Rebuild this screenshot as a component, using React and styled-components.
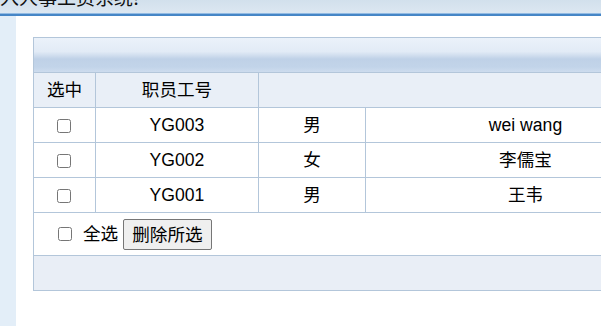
import React from "react";
import styled, { createGlobalStyle } from "styled-components";

const Global = createGlobalStyle`
  html, body { margin: 0; padding: 0; background: #fff; overflow: hidden; }
  body { font-family: "Liberation Sans", "Noto Sans CJK SC", sans-serif; color: #000; }
`;

const Page = styled.div`
  display: flex;
  flex-direction: column;
  width: 601px;
  height: 326px;
  overflow: hidden;
`;

const TopBar = styled.div`
  height: 14px;
  flex: none;
  overflow: hidden;
  background: linear-gradient(to bottom, #d2e0ec, #dde8f2);
  box-shadow: inset 0 -1px 0 #93bbe3;
  border-bottom: 2px solid #4686c6;
`;

const Welcome = styled.div`
  font-family: "Noto Sans CJK SC", sans-serif;
  font-size: 19px;
  line-height: 19px;
  white-space: nowrap;
  margin: -13px 0 0 -57px;
  color: #111;
`;

const Body = styled.div`
  display: flex;
  flex: 1;
  min-height: 0;
`;

const Sidebar = styled.div`
  width: 16px;
  flex: none;
  background: #e3eef8;
`;

const Main = styled.div`
  flex: 1;
  padding: 21px 0 0 17px;
  overflow: hidden;
`;

const Panel = styled.div`
  width: 760px;
  border: 1px solid #b3c6da;
`;

const TitleBar = styled.div`
  height: 34px;
  border-bottom: 1px solid #b3c6da;
  background: linear-gradient(
    to bottom,
    #ebf2fa 0%,
    #e2ebf6 40%,
    #bfd1e7 62%,
    #c2d4e9 85%,
    #cddcee 100%
  );
`;

const Table = styled.table`
  width: 100%;
  border-collapse: separate;
  border-spacing: 0;
  table-layout: fixed;
  font-size: 17.6px;
`;

const Cell = styled.td`
  box-sizing: border-box;
  height: ${(p) => p.$h || 35}px;
  padding: 0;
  font-weight: 400;
  text-align: ${(p) => p.$align || "center"};
  vertical-align: middle;
  border-bottom: 1px solid #b3c6da;
  border-right: ${(p) => (p.$last ? "none" : "1px solid #b3c6da")};
  background: ${(p) => (p.$head ? "#e9eff7" : "#fff")};
  line-height: 22px;
`;

const Check = styled.input.attrs({ type: "checkbox" })`
  width: 14px;
  height: 14px;
  margin: 3px 4px 3px 3px;
  vertical-align: middle;
`;

const FooterInner = styled.div`
  display: flex;
  align-items: center;
  padding-left: 21px;
`;

const Label = styled.span`
  margin-left: 7px;
  font-size: 17.6px;
`;

const Button = styled.button`
  height: 31px;
  margin-left: 5px;
  padding: 0 8px;
  font-family: "Noto Sans CJK SC", sans-serif;
  font-size: 17.6px;
  line-height: 22px;
  color: #000;
  background: #efefef;
  border: 1px solid #767676;
  border-radius: 2px;
`;

const BottomBar = styled.div`
  height: 34px;
  background: #e9eef6;
`;

const rows = [
  { id: "YG003", sex: "男", name: "wei wang" },
  { id: "YG002", sex: "女", name: "李儒宝" },
  { id: "YG001", sex: "男", name: "王韦" },
];

export default function App() {
  return (
    <>
      <Global />
      <Page>
        <TopBar>
          <Welcome>欢迎进入人事工资系统!</Welcome>
        </TopBar>
        <Body>
          <Sidebar />
          <Main>
            <Panel>
              <TitleBar />
              <Table>
                <colgroup>
                  <col style={{ width: 62 }} />
                  <col style={{ width: 163 }} />
                  <col style={{ width: 107 }} />
                  <col style={{ width: 320 }} />
                  <col />
                </colgroup>
                <thead>
                  <tr>
                    <Cell as="th" $head>选中</Cell>
                    <Cell as="th" $head>职员工号</Cell>
                    <Cell as="th" $head $last colSpan={3} />
                  </tr>
                </thead>
                <tbody>
                  {rows.map((r) => (
                    <tr key={r.id}>
                      <Cell><Check /></Cell>
                      <Cell>{r.id}</Cell>
                      <Cell>{r.sex}</Cell>
                      <Cell>{r.name}</Cell>
                      <Cell $last />
                    </tr>
                  ))}
                  <tr>
                    <Cell $last $h={43} $align="left" colSpan={5}>
                      <FooterInner>
                        <Check />
                        <Label>全选</Label>
                        <Button>删除所选</Button>
                      </FooterInner>
                    </Cell>
                  </tr>
                </tbody>
              </Table>
              <BottomBar />
            </Panel>
          </Main>
        </Body>
      </Page>
    </>
  );
}
